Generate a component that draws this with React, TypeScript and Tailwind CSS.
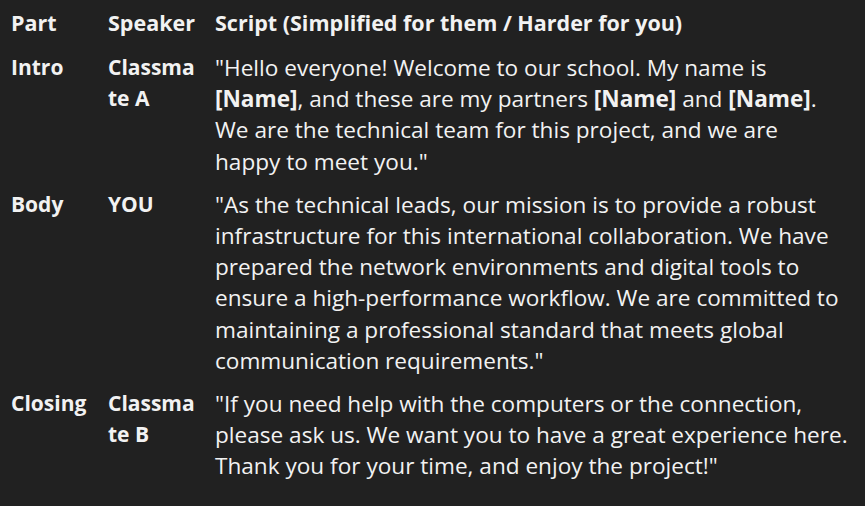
const rows = [
  {
    part: 'Intro',
    speaker: ['Classma', 'te A'],
    lines: [
      <>"Hello everyone! Welcome to our school. My name is</>,
      <><b>[Name]</b>, and these are my partners <b>[Name]</b> and <b>[Name]</b>.</>,
      <>We are the technical team for this project, and we are</>,
      <>happy to meet you."</>,
    ],
  },
  {
    part: 'Body',
    speaker: ['YOU'],
    lines: [
      <>"As the technical leads, our mission is to provide a robust</>,
      <>infrastructure for this international collaboration. We have</>,
      <>prepared the network environments and digital tools to</>,
      <>ensure a high-performance workflow. We are committed to</>,
      <>maintaining a professional standard that meets global</>,
      <>communication requirements."</>,
    ],
  },
  {
    part: 'Closing',
    speaker: ['Classma', 'te B'],
    lines: [
      <>"If you need help with the computers or the connection,</>,
      <>please ask us. We want you to have a great experience here.</>,
      <>Thank you for your time, and enjoy the project!"</>,
    ],
  },
]

export default function App() {
  return (
    <div
      className="min-h-screen w-full bg-[#212121] text-[#f2f2f2] pl-[11px] pt-[8px]"
      style={{ fontFamily: '"Open Sans", "Noto Sans", sans-serif' }}
    >
      <div className="grid grid-cols-[97px_107px_1fr] text-[21.5px] font-bold leading-[30px] pb-[14px] whitespace-nowrap">
        <div>Part</div>
        <div>Speaker</div>
        <div>Script (Simplified for them / Harder for you)</div>
      </div>
      {rows.map((r) => (
        <div key={r.part} className="grid grid-cols-[97px_107px_1fr] leading-[31.2px] pb-[12px]">
          <div className="font-bold text-[21px]">{r.part}</div>
          <div className="font-bold text-[21px]">
            {r.speaker.map((s) => (
              <div key={s}>{s}</div>
            ))}
          </div>
          <div className="text-[22.6px] whitespace-nowrap [&_b]:font-bold">
            {r.lines.map((l, i) => (
              <div key={i}>{l}</div>
            ))}
          </div>
        </div>
      ))}
    </div>
  )
}
